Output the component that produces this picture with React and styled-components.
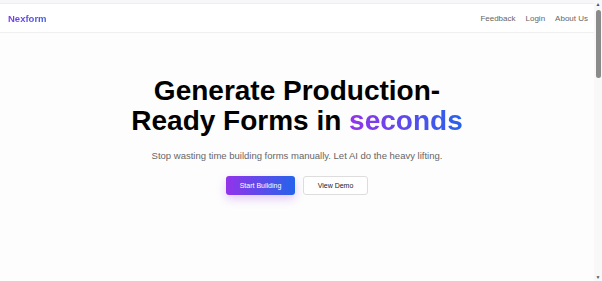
import React from 'react';
import styled, { createGlobalStyle } from 'styled-components';

const Global = createGlobalStyle`
  html, body { margin: 0; padding: 0; }
  body {
    background: #fdfdfd;
    font-family: "Liberation Sans", Arial, sans-serif;
    color: #111;
  }
`;

const Page = styled.div`
  min-height: 1100px;
  display: flex;
  flex-direction: column;
  padding-right: 8px;
`;

const TopStrip = styled.div`
  height: 3px;
  background: #f7f7f9;
`;

const Header = styled.header`
  height: 28px;
  display: flex;
  align-items: center;
  justify-content: space-between;
  padding: 0 6px 0 8px;
  background: #fff;
  border-top: 1px solid #eee;
  border-bottom: 1px solid #f0f0f0;
`;

const Logo = styled.div`
  font-size: 9.5px;
  font-weight: 700;
  background: linear-gradient(90deg, #7c3aed, #3b5bdb);
  -webkit-background-clip: text;
  background-clip: text;
  color: transparent;
`;

const Nav = styled.nav`
  display: flex;
  gap: 10px;
`;

const NavLink = styled.a`
  font-size: 8px;
  color: #666;
  text-decoration: none;
`;

const Hero = styled.section`
  display: flex;
  flex-direction: column;
  align-items: center;
  padding-top: 43px;
`;

const Title = styled.h1`
  margin: 0;
  max-width: 360px;
  text-align: center;
  font-size: 28px;
  line-height: 30px;
  font-weight: 700;
  color: #000;
`;

const Accent = styled.span`
  display: inline-block;
  background: linear-gradient(90deg, #9333ea, #2563eb);
  -webkit-background-clip: text;
  background-clip: text;
  color: transparent;
`;

const Subtitle = styled.p`
  margin: 14px 0 0;
  font-size: 9.5px;
  color: #666;
`;

const Actions = styled.div`
  display: flex;
  gap: 8px;
  margin-top: 15px;
`;

const Button = styled.button`
  height: 19px;
  width: ${p => (p.primary ? '69px' : '65px')};
  padding: 0;
  font-family: inherit;
  font-size: 7px;
  border-radius: 3px;
  cursor: pointer;
  border: ${p => (p.primary ? 'none' : '1px solid #ddd')};
  color: ${p => (p.primary ? '#fff' : '#222')};
  background: ${p => (p.primary ? 'linear-gradient(90deg, #9333ea, #2563eb)' : '#fff')};
  box-shadow: ${p => (p.primary ? '0 4px 10px rgba(147, 51, 234, 0.25)' : 'none')};
`;

const ScrollTrack = styled.div`
  position: fixed;
  top: 0;
  right: 0;
  bottom: 0;
  width: 8px;
  background: #f8f8f8;
  display: flex;
  flex-direction: column;
  align-items: center;
`;

const Arrow = styled.div`
  height: 8px;
  font-size: 5px;
  line-height: 8px;
  color: #555;
`;

const Thumb = styled.div`
  margin-top: 2px;
  width: 5px;
  height: 68px;
  border-radius: 3px;
  background: #8a8a8a;
`;

const Spacer = styled.div`
  flex: 1;
`;

export default function App() {
  return (
    <Page>
      <Global />
      <TopStrip />
      <Header>
        <Logo>Nexform</Logo>
        <Nav>
          <NavLink href="#">Feedback</NavLink>
          <NavLink href="#">Login</NavLink>
          <NavLink href="#">About Us</NavLink>
        </Nav>
      </Header>
      <Hero>
        <Title>
          Generate Production-Ready Forms in <Accent>seconds</Accent>
        </Title>
        <Subtitle>Stop wasting time building forms manually. Let AI do the heavy lifting.</Subtitle>
        <Actions>
          <Button primary>Start Building</Button>
          <Button>View Demo</Button>
        </Actions>
      </Hero>
      <ScrollTrack>
        <Arrow>▲</Arrow>
        <Thumb />
        <Spacer />
        <Arrow>▼</Arrow>
      </ScrollTrack>
    </Page>
  );
}
